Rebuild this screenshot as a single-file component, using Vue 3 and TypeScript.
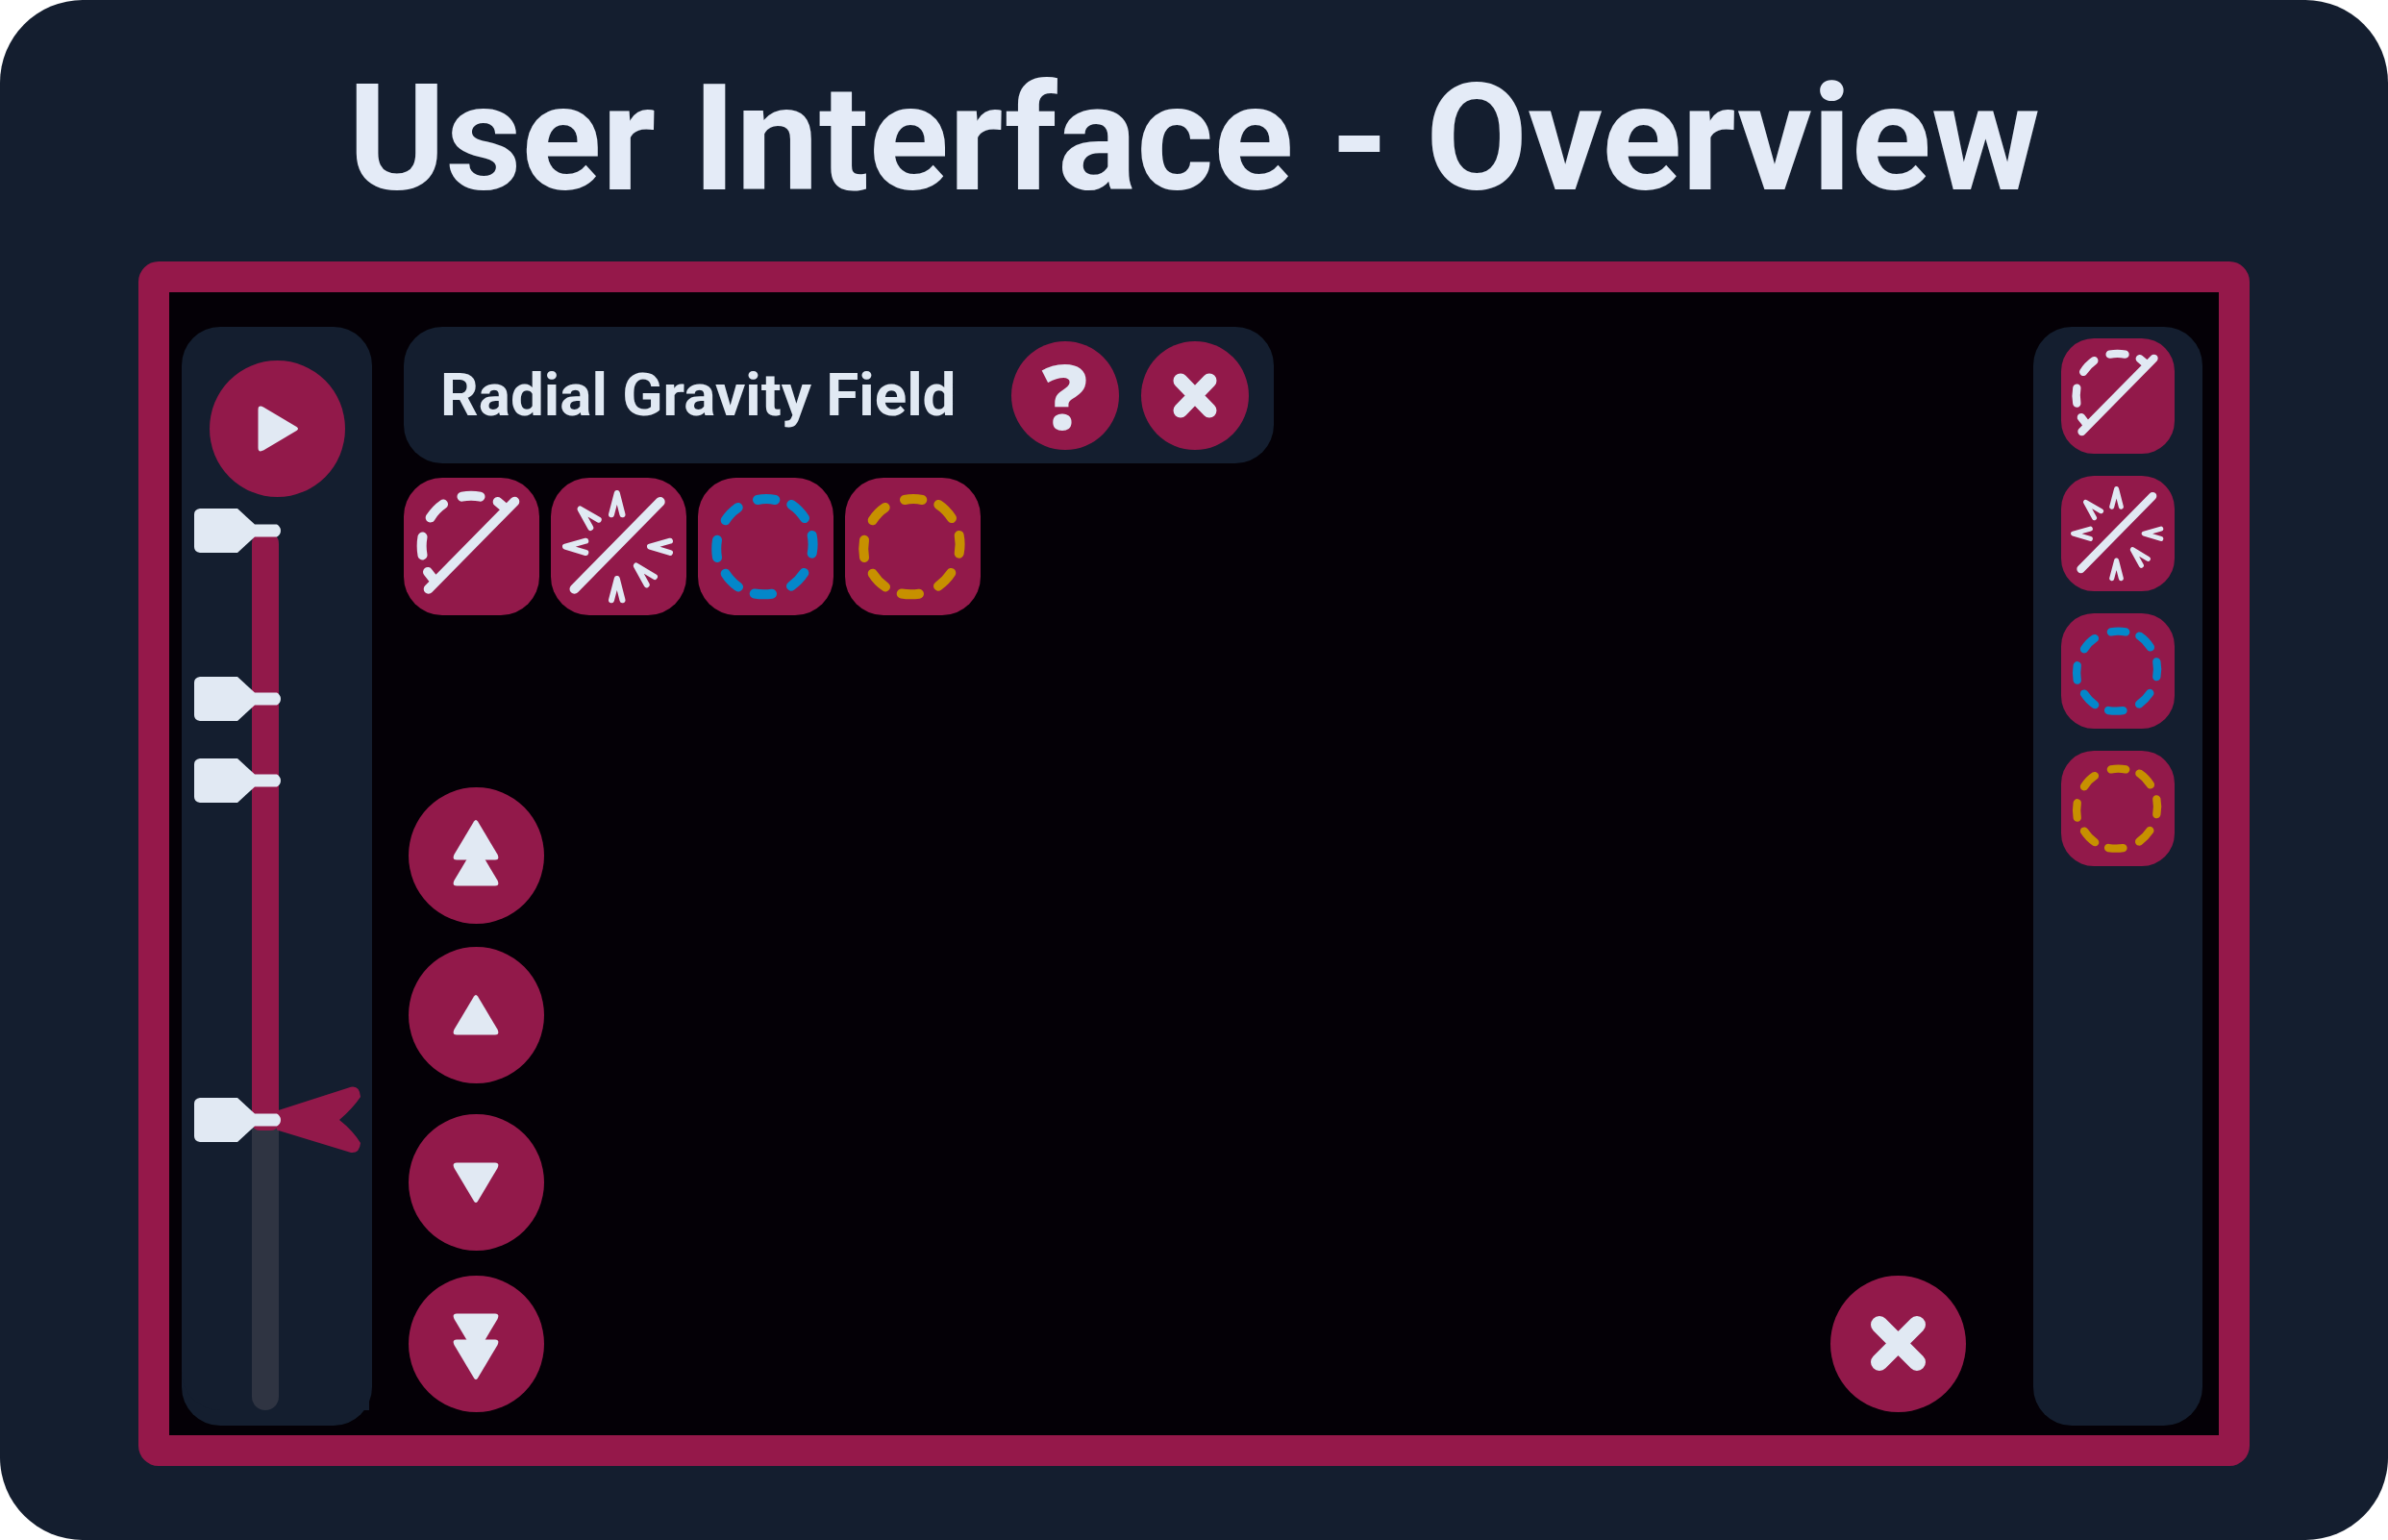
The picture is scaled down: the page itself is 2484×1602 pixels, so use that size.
<script setup lang="ts">
import { ref } from 'vue'

interface Stroke {
  d: string
  width: number
}

interface Tool {
  label: string
  color: string
  strokes: Stroke[]
}

const light = '#e1e9f3'

const ring =
  'M62 23 Q71 21 80.3 23 M97.3 28 Q105 33 111 42 M118.7 60 Q120.5 69 118.7 78.7 M110.3 99 Q105 107 97 112.7 ' +
  'M77 120.7 Q68 122 58.7 120.5 M42 113.5 Q34 108 28.7 99.7 M20 83 Q18.5 74 20 64.7 M28.7 44.3 Q34 36 41.7 31'

const tools: Tool[] = [
  {
    label: 'Half field',
    color: light,
    strokes: [
      {
        d: 'M25.7 115.7 L115.3 24.7 M97.7 25 L106 32 M25 98 L32 107 M60.5 19.7 Q70 18 79.5 19.7 M41 27.5 Q33 33 27.7 41.5 M19.5 61.5 Q17.8 71 19.5 80.5',
        width: 10,
      },
    ],
  },
  {
    label: 'Directed field',
    color: light,
    strokes: [
      { d: 'M24.5 115.7 L113.7 25', width: 10 },
      {
        d:
          'M63 38.3 L68.8 16 L74.5 38.3 M49.7 43.7 L30.5 32.5 L41.3 52 M36.3 65.7 L15 71.7 L36.3 78 ' +
          'M124 65.7 L103 71.7 L124 78 M108 103 L88.8 91.5 L99.7 111.3 M63 127.3 L68.8 105 L74.5 127.3',
        width: 6,
      },
    ],
  },
  { label: 'Blue radius', color: '#0487ca', strokes: [{ d: ring, width: 10 }] },
  { label: 'Gold radius', color: '#c79000', strokes: [{ d: ring, width: 10 }] },
]

/* Triangle whose tip sits at the origin and whose base lies below it */
const tri = 'M-2 1.5 Q0 -1.5 2 1.5 L22.6 36 Q25 41.5 20 41.5 H-20 Q-25 41.5 -22.6 36 Z'

const speeds = [
  {
    name: 'up',
    buttons: [
      { label: 'Jump forward', marks: ['translate(70 34)', 'translate(70 61)'] },
      { label: 'Step forward', marks: ['translate(70 50)'] },
    ],
  },
  {
    name: 'down',
    buttons: [
      { label: 'Step back', marks: ['translate(70 92) rotate(180)'] },
      { label: 'Jump back', marks: ['translate(70 81) rotate(180)', 'translate(70 108) rotate(180)'] },
    ],
  },
]

const keyframes = [0, 19.1, 28.4, 67]
const position = ref(67)
</script>

<template>
  <main class="page">
    <h1>User Interface - Overview</h1>

    <section class="screen">
      <aside class="panel time-panel">
        <button type="button" class="round" aria-label="Play">
          <svg viewBox="0 0 141 142"><path :d="tri" transform="translate(92 71) rotate(90)" /></svg>
        </button>
        <div class="timeline">
          <div class="track">
            <div class="fill" :style="{ height: position + 1.2 + '%' }"></div>
          </div>
          <svg class="cursor" viewBox="0 0 88 70" :style="{ top: position + '%' }">
            <path d="M0 25.5 L77 .8 Q86 -1 87 11 Q79 23 65 35 Q79 46 87 59 Q86 70 77 69 L0 45.5 Z" />
          </svg>
          <button
            v-for="k in keyframes"
            :key="k"
            type="button"
            class="keyframe"
            :aria-label="`Keyframe ${k}%`"
            :style="{ top: k + '%' }"
            @click="position = k"
          >
            <svg viewBox="0 0 90 46">
              <path d="M6 0 H45 L63 16.5 H86 Q90 19 90 23 Q90 27 86 29.5 H63 L45 46 H6 Q0 45 0 40 V6 Q0 1 6 0 Z" />
            </svg>
          </button>
          <input v-model.number="position" class="scrub" type="range" min="0" max="100" aria-label="Time" />
        </div>
      </aside>

      <div class="stage">
        <header class="toolbar">
          <h2>Radial Gravity Field</h2>
          <button type="button" class="round small help" aria-label="Help">?</button>
          <button type="button" class="round small" aria-label="Close">
            <svg viewBox="0 0 112 113"><path class="cross" stroke-width="15" d="M41 41 L71 72 M71 41 L41 72" /></svg>
          </button>
        </header>

        <div class="tools">
          <button v-for="t in tools" :key="t.label" type="button" class="tile" :aria-label="t.label">
            <svg viewBox="0 0 141 143">
              <path
                v-for="s in t.strokes"
                :key="s.width"
                class="line"
                :d="s.d"
                :stroke="t.color"
                :stroke-width="s.width"
              />
            </svg>
          </button>
        </div>

        <div class="bottom">
          <div class="speeds">
            <div v-for="g in speeds" :key="g.name" class="pair" :class="g.name">
              <button v-for="b in g.buttons" :key="b.label" type="button" class="round" :aria-label="b.label">
                <svg viewBox="0 0 141 142">
                  <path v-for="m in b.marks" :key="m" :d="tri" :transform="m" />
                </svg>
              </button>
            </div>
          </div>
          <button type="button" class="round" aria-label="Exit">
            <svg viewBox="0 0 141 142"><path class="cross" stroke-width="18" d="M51 51 L90 90 M90 51 L51 90" /></svg>
          </button>
        </div>
      </div>

      <aside class="panel palette">
        <button v-for="t in tools" :key="t.label" type="button" class="tile compact" :aria-label="t.label">
          <svg viewBox="0 0 141 143">
            <path
              v-for="s in t.strokes"
              :key="s.width"
              class="line"
              :d="s.d"
              :stroke="t.color"
              :stroke-width="s.width"
            />
          </svg>
        </button>
      </aside>
    </section>
  </main>
</template>

<style>
body {
  background: #fff;
}
</style>

<style scoped>
* {
  box-sizing: border-box;
}

.page {
  display: flex;
  flex-direction: column;
  min-height: 100vh;
  padding: 18px 144px 77px;
  border-radius: 86px;
  background: #141e2f;
  color: #e1e9f3;
  font-family: Roboto, 'Liberation Sans', sans-serif;
}

h1 {
  margin: 0;
  color: #e4ebf7;
  font-size: 154px;
  font-weight: 700;
  line-height: 254px;
  text-align: center;
  white-space: nowrap;
}

.screen {
  display: flex;
  flex: 1;
  padding: 36px 17px 10px 13px;
  border: 32px solid #95184a;
  border-radius: 21px;
  background: #040006;
}

.panel {
  display: flex;
  flex-direction: column;
  align-items: center;
  border-radius: 40px;
  background: #141e2f;
}

button {
  display: block;
  flex: none;
  margin: 0;
  padding: 0;
  border: 0;
  background: none;
  color: inherit;
  font-family: inherit;
  cursor: pointer;
}

svg {
  display: block;
  width: 100%;
  height: 100%;
  fill: #e1e9f3;
}

.round {
  width: 141px;
  height: 142px;
  border-radius: 50%;
  background: #92194a;
}

.small {
  width: 112px;
  height: 113px;
}

.help {
  font-family: 'Open Sans', 'Noto Sans', sans-serif;
  font-size: 94px;
  font-weight: 800;
  line-height: 113px;
}

.cross,
.line {
  fill: none;
  stroke-linecap: round;
  stroke-linejoin: round;
}

.cross {
  stroke: #e1e9f3;
}

.tile {
  width: 141px;
  height: 143px;
  border-radius: 40px;
  background: #92194a;
}

.compact {
  width: 118px;
  height: 120px;
  border-radius: 34px;
}

.time-panel {
  width: 198px;
  padding: 35px 3px 16px 0;
}

.time-panel > .round {
  margin-left: 3px;
}

.timeline {
  position: relative;
  flex: 1;
  width: 100%;
  margin-top: 35px;
  padding-left: 73px;
  border-bottom-left-radius: 40px;
  background: #141e2f;
}

.track {
  width: 28px;
  height: 100%;
  border-radius: 14px;
  background: #2f3442;
}

.fill {
  border-radius: 14px 14px 8px 8px;
  background: #92194a;
}

.keyframe,
.cursor {
  position: absolute;
  transform: translateY(-50%);
}

.keyframe {
  left: 13px;
  width: 90px;
  height: 46px;
}

.cursor {
  left: 99px;
  width: 88px;
  height: 70px;
  fill: #92194a;
}

.scrub {
  position: absolute;
  top: 0;
  left: 103px;
  width: 84px;
  height: 100%;
  margin: 0;
  opacity: 0;
  writing-mode: vertical-lr;
}

.stage {
  display: flex;
  flex: 1;
  flex-direction: column;
  align-items: flex-start;
  padding: 0 70px 14px 33px;
}

.toolbar {
  display: flex;
  align-items: center;
  gap: 23px;
  height: 142px;
  padding: 0 26px 0 38px;
  border-radius: 40px;
  background: #141e2f;
}

h2 {
  margin: 0 34px 0 0;
  font-size: 62px;
  font-weight: 700;
  line-height: 72px;
  white-space: nowrap;
}

.tools {
  display: flex;
  gap: 12px;
  margin-top: 15px;
}

.bottom {
  display: flex;
  align-items: flex-end;
  justify-content: space-between;
  width: 100%;
  margin-top: auto;
  padding-left: 5px;
}

.speeds {
  display: grid;
  gap: 32px;
}

.pair {
  display: grid;
}

.up {
  gap: 24px;
}

.down {
  gap: 26px;
}

.palette {
  gap: 23px;
  width: 176px;
  padding-top: 12px;
}
</style>
